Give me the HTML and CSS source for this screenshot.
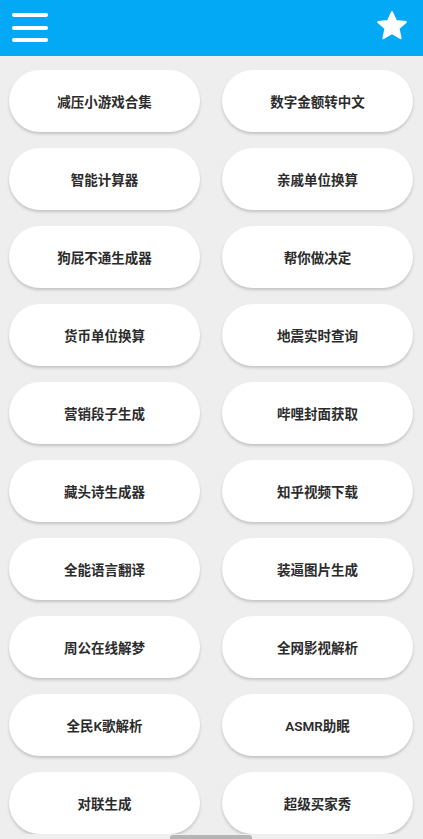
FILE: index.html
```html
<!DOCTYPE html>
<html lang="zh-CN">

<head>
    <meta charset="UTF-8">
    <title>工具箱</title>
    <link rel="stylesheet" href="styles.css">
</head>

<body>
    <header class="top-bar">
        <button class="icon-btn menu-btn" aria-label="菜单">
            <span></span>
            <span></span>
            <span></span>
        </button>
        <button class="icon-btn star-btn" aria-label="收藏">
            <svg width="34" height="34" viewBox="0 0 24 24">
                <path fill="#fff" stroke="#fff" stroke-width="1.4" stroke-linejoin="round"
                    d="M12 2.2l2.9 6.3 6.9.7-5.2 4.6 1.5 6.8L12 17.1l-6.1 3.5 1.5-6.8-5.2-4.6 6.9-.7z" />
            </svg>
        </button>
    </header>

    <main class="tool-grid">
        <a class="tool-btn">减压小游戏合集</a>
        <a class="tool-btn">数字金额转中文</a>
        <a class="tool-btn">智能计算器</a>
        <a class="tool-btn">亲戚单位换算</a>
        <a class="tool-btn">狗屁不通生成器</a>
        <a class="tool-btn">帮你做决定</a>
        <a class="tool-btn">货币单位换算</a>
        <a class="tool-btn">地震实时查询</a>
        <a class="tool-btn">营销段子生成</a>
        <a class="tool-btn">哔哩封面获取</a>
        <a class="tool-btn">藏头诗生成器</a>
        <a class="tool-btn">知乎视频下载</a>
        <a class="tool-btn">全能语言翻译</a>
        <a class="tool-btn">装逼图片生成</a>
        <a class="tool-btn">周公在线解梦</a>
        <a class="tool-btn">全网影视解析</a>
        <a class="tool-btn">全民K歌解析</a>
        <a class="tool-btn">ASMR助眠</a>
        <a class="tool-btn">对联生成</a>
        <a class="tool-btn">超级买家秀</a>
    </main>

    <div class="scroll-handle"></div>
</body>

</html>
```

FILE: styles.css
```css
body {
    font-family: Roboto, "Noto Sans CJK SC", sans-serif;
    margin: 0;
    padding: 0;
    background-color: #eeeeee;
}

.top-bar {
    height: 56px;
    background-color: #03a9f4;
    display: flex;
    align-items: center;
    justify-content: space-between;
    padding: 0 14px 0 12px;
}

.icon-btn {
    background: none;
    border: none;
    padding: 0;
    cursor: pointer;
}

.menu-btn {
    width: 36px;
    display: flex;
    flex-direction: column;
    gap: 8.5px;
    margin-top: -1px;
}

.menu-btn span {
    display: block;
    height: 4px;
    background-color: #fff;
    border-radius: 2px;
}

.star-btn svg {
    display: block;
    margin-top: -4px;
}

.tool-grid {
    display: grid;
    grid-template-columns: 1fr 1fr;
    column-gap: 22px;
    row-gap: 16px;
    padding: 14px 10px 0 9px;
}

.tool-btn {
    height: 62px;
    display: flex;
    align-items: center;
    justify-content: center;
    background-color: #fff;
    border-radius: 31px;
    box-shadow: 0 2px 3px rgba(0, 0, 0, 0.18);
    color: #2b2b2b;
    font-size: 13.5px;
    font-weight: 600;
    cursor: pointer;
}

.scroll-handle {
    position: fixed;
    bottom: 0;
    left: 170px;
    width: 82px;
    height: 4px;
    background-color: #b5b5b5;
    border-radius: 3px 3px 0 0;
}
```
